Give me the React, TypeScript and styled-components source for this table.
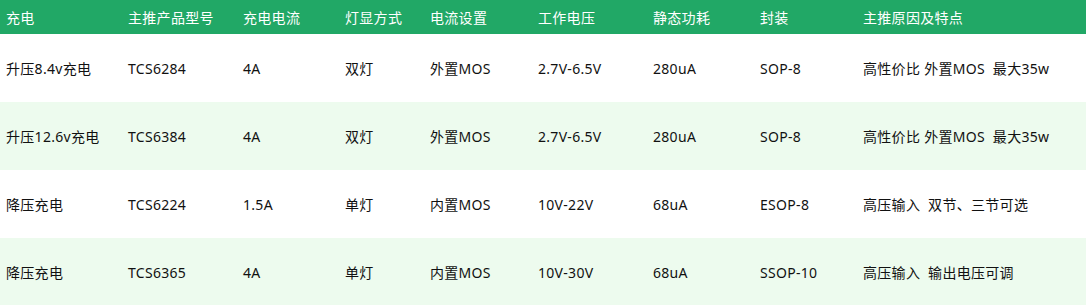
import styled, { createGlobalStyle } from "styled-components";

const GlobalStyle = createGlobalStyle`
  html, body {
    margin: 0;
    padding: 0;
    background: #ffffff;
    overflow: hidden;
  }
  body {
    font-family: "Noto Sans", "Noto Sans CJK SC", sans-serif;
  }
`;

const columns = "122px 115px 102px 85px 108px 115px 107px 103px 229px";

const Table = styled.div`
  width: 1086px;
  display: flex;
  flex-direction: column;
`;

const HeadRow = styled.div`
  display: grid;
  grid-template-columns: ${columns};
  height: 34px;
  align-items: center;
  background: #21a866;
`;

const HeadCell = styled.div`
  padding-left: 6px;
  font-size: 14px;
  letter-spacing: 0.3px;
  color: #ffffff;
  white-space: nowrap;
`;

const Row = styled.div<{ $alt: boolean }>`
  display: grid;
  grid-template-columns: ${columns};
  height: 68px;
  align-items: center;
  background: ${({ $alt }) => ($alt ? "#edfbee" : "#ffffff")};
`;

const Cell = styled.div`
  padding-left: 6px;
  font-size: 14px;
  letter-spacing: 0.3px;
  color: #111111;
  white-space: pre;
`;

const headers = [
  "充电",
  "主推产品型号",
  "充电电流",
  "灯显方式",
  "电流设置",
  "工作电压",
  "静态功耗",
  "封装",
  "主推原因及特点",
];

const rows = [
  ["升压8.4v充电", "TCS6284", "4A", "双灯", "外置MOS", "2.7V-6.5V", "280uA", "SOP-8", "高性价比 外置MOS  最大35w"],
  ["升压12.6v充电", "TCS6384", "4A", "双灯", "外置MOS", "2.7V-6.5V", "280uA", "SOP-8", "高性价比 外置MOS  最大35w"],
  ["降压充电", "TCS6224", "1.5A", "单灯", "内置MOS", "10V-22V", "68uA", "ESOP-8", "高压输入  双节、三节可选"],
  ["降压充电", "TCS6365", "4A", "单灯", "内置MOS", "10V-30V", "68uA", "SSOP-10", "高压输入  输出电压可调"],
];

export default function App() {
  return (
    <>
      <GlobalStyle />
      <Table>
        <HeadRow>
          {headers.map((h) => (
            <HeadCell key={h}>{h}</HeadCell>
          ))}
        </HeadRow>
        {rows.map((r, i) => (
          <Row key={i} $alt={i % 2 === 1}>
            {r.map((c, j) => (
              <Cell key={j}>{c}</Cell>
            ))}
          </Row>
        ))}
      </Table>
    </>
  );
}
